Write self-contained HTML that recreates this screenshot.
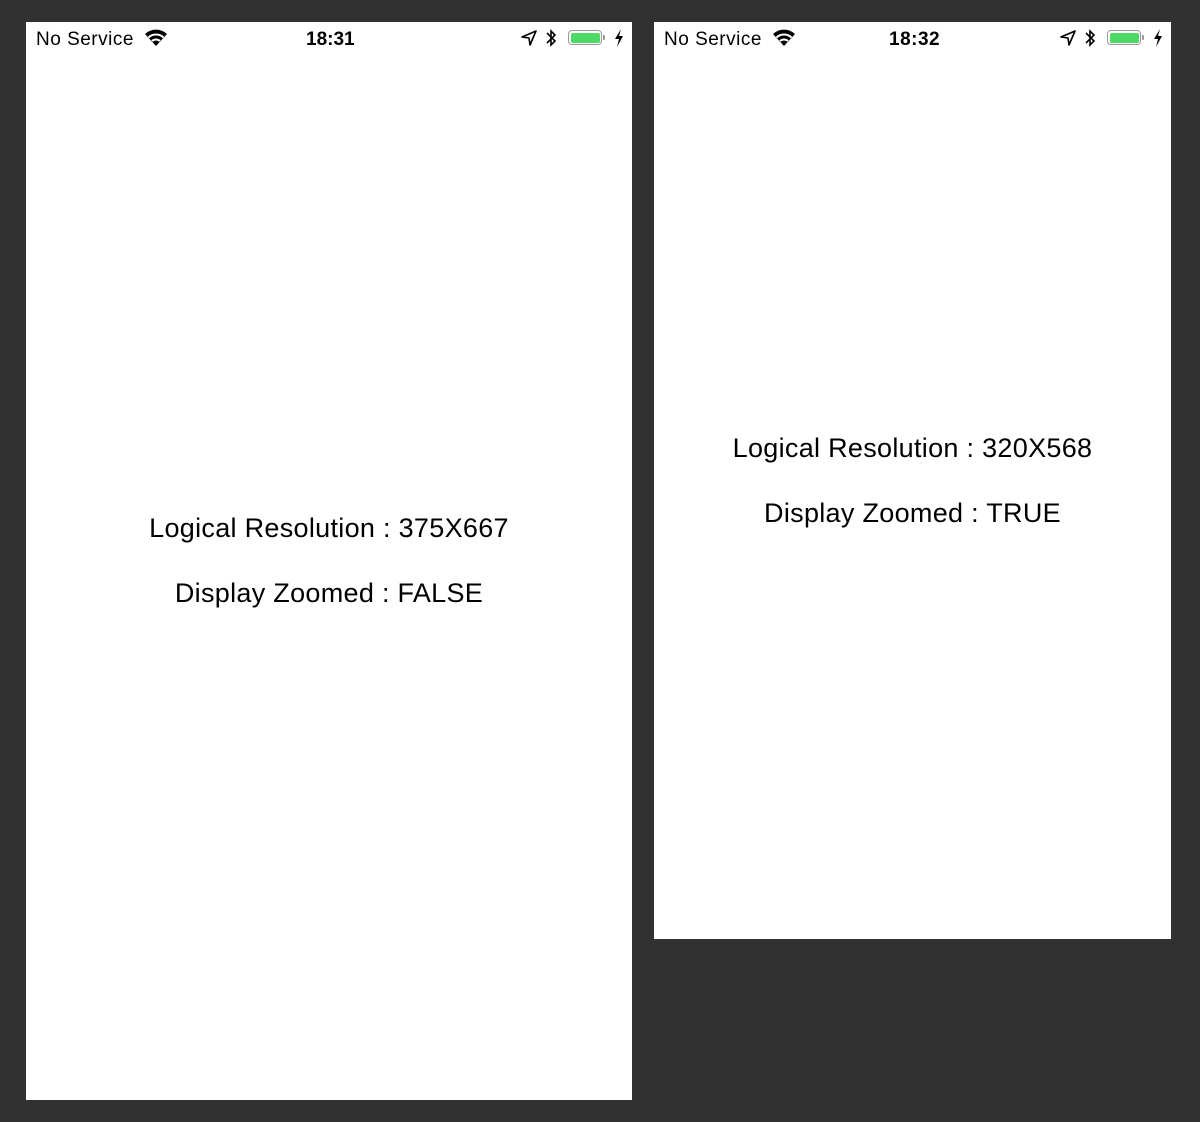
<!DOCTYPE html>
<html><head><style>
body{margin:0;width:1200px;height:1122px;background:#313131;position:relative;overflow:hidden;font-family:"Liberation Sans",sans-serif;color:#000}
.s{position:absolute;background:#fff}
.t{position:absolute;white-space:nowrap;line-height:1}
.c{position:absolute;left:0;right:0;text-align:center;font-size:27px;letter-spacing:0.3px;white-space:nowrap;line-height:1}
.bat{position:absolute;width:34px;height:15px;border:1.5px solid #999;border-radius:4px;box-sizing:border-box}
.bat i{position:absolute;left:1.5px;top:1.5px;right:1.5px;bottom:1.5px;background:#4cd964;border-radius:2px}
.nub{position:absolute;width:2px;height:5px;background:#999;border-radius:0 1px 1px 0}
</style></head><body>
<div class="s" style="left:26px;top:22px;width:606px;height:1078px">
  <div class="t" style="left:10px;top:8px;font-size:19px;letter-spacing:0.5px">No Service</div>
  <svg style="position:absolute;left:118px;top:7px" width="24" height="18" viewBox="0 0 24 18"><path d="M12 17 L1 5 A16 16 0 0 1 23 5 Z" fill="#000"/><path d="M4.5 8.5 A11 11 0 0 1 19.5 8.5" stroke="#fff" stroke-width="2" fill="none"/><path d="M8 12 A6 6 0 0 1 16 12" stroke="#fff" stroke-width="2" fill="none"/></svg>
  <div class="t" style="left:280px;top:8px;font-size:19px;font-weight:bold">18:31</div>
  <svg style="position:absolute;left:495px;top:8px" width="16" height="16" viewBox="0 0 16 16"><path d="M15 1 L1 7 L8 8 L9 15 Z" fill="none" stroke="#000" stroke-width="1.6" stroke-linejoin="round"/></svg>
  <svg style="position:absolute;left:519px;top:6px" width="12" height="20" viewBox="0 0 12 20"><path d="M2 5 L10 13 L6 17 L6 3 L10 7 L2 15" fill="none" stroke="#000" stroke-width="1.6"/></svg>
  <div class="bat" style="left:542px;top:8px"><i></i></div><div class="nub" style="left:577px;top:13px"></div>
  <svg style="position:absolute;left:588px;top:7px" width="10" height="18" viewBox="0 0 10 18"><path d="M7 0 L1 10 L5 10 L3 18 L9 7 L5 7 Z" fill="#000"/></svg>
  <div class="c" style="top:493px">Logical Resolution : 375X667</div>
  <div class="c" style="top:558px">Display Zoomed : FALSE</div>
</div>
<div class="s" style="left:654px;top:22px;width:517px;height:917px">
  <div class="t" style="left:10px;top:8px;font-size:19px;letter-spacing:0.5px">No Service</div>
  <svg style="position:absolute;left:118px;top:7px" width="24" height="18" viewBox="0 0 24 18"><path d="M12 17 L1 5 A16 16 0 0 1 23 5 Z" fill="#000"/><path d="M4.5 8.5 A11 11 0 0 1 19.5 8.5" stroke="#fff" stroke-width="2" fill="none"/><path d="M8 12 A6 6 0 0 1 16 12" stroke="#fff" stroke-width="2" fill="none"/></svg>
  <div class="t" style="left:235px;top:8px;font-size:19px;font-weight:bold;letter-spacing:0.5px">18:32</div>
  <svg style="position:absolute;left:406px;top:8px" width="16" height="16" viewBox="0 0 16 16"><path d="M15 1 L1 7 L8 8 L9 15 Z" fill="none" stroke="#000" stroke-width="1.6" stroke-linejoin="round"/></svg>
  <svg style="position:absolute;left:430px;top:6px" width="12" height="20" viewBox="0 0 12 20"><path d="M2 5 L10 13 L6 17 L6 3 L10 7 L2 15" fill="none" stroke="#000" stroke-width="1.6"/></svg>
  <div class="bat" style="left:453px;top:8px"><i></i></div><div class="nub" style="left:488px;top:13px"></div>
  <svg style="position:absolute;left:499px;top:7px" width="10" height="18" viewBox="0 0 10 18"><path d="M7 0 L1 10 L5 10 L3 18 L9 7 L5 7 Z" fill="#000"/></svg>
  <div class="c" style="top:413px">Logical Resolution : 320X568</div>
  <div class="c" style="top:478px">Display Zoomed : TRUE</div>
</div>
</body></html>
